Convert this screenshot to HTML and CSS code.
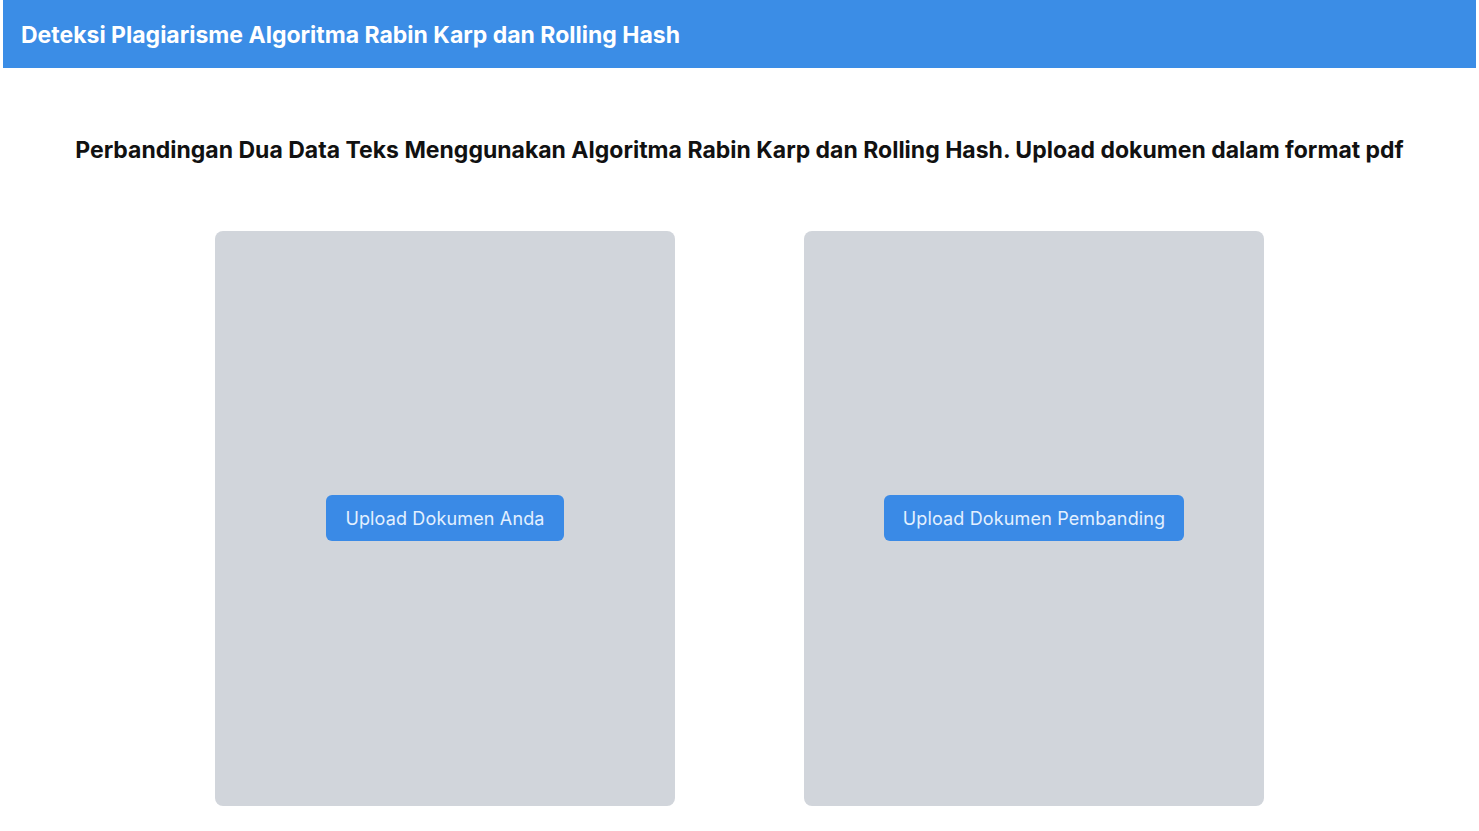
FILE: index.html
```html
<!DOCTYPE html>
<html lang="id">
<head>
<meta charset="utf-8">
<title>Deteksi Plagiarisme</title>
<link rel="stylesheet" href="styles.css">
</head>
<body>
<header class="topbar">
  <h1 class="brand">Deteksi Plagiarisme Algoritma Rabin Karp dan Rolling Hash</h1>
</header>
<main class="content">
  <h2 class="subtitle">Perbandingan Dua Data Teks Menggunakan Algoritma Rabin Karp dan Rolling Hash. Upload dokumen dalam format pdf</h2>
  <div class="panels">
    <section class="panel">
      <button class="upload-btn" type="button">Upload Dokumen Anda</button>
    </section>
    <section class="panel">
      <button class="upload-btn" type="button">Upload Dokumen Pembanding</button>
    </section>
  </div>
</main>
</body>
</html>
```

FILE: styles.css
```css
* { box-sizing: border-box; }
html, body { margin: 0; padding: 0; background: #ffffff; }
body {
  font-family: Inter, "Noto Sans", "Liberation Sans", sans-serif;
  color: #111111;
  padding: 0 3px;
}
.topbar {
  height: 68px;
  background: #3b8de6;
  display: flex;
  align-items: center;
  padding: 2px 18px 0;
}
.brand {
  margin: 0;
  font-size: 23px;
  font-weight: 700;
  color: #ffffff;
  letter-spacing: 0;
}
.content {
  display: flex;
  flex-direction: column;
  align-items: center;
}
.subtitle {
  margin: 68px 0 0;
  font-size: 23px;
  font-weight: 700;
  color: #111111;
  letter-spacing: 0;
  line-height: 28px;
  text-align: center;
}
.panels {
  margin-top: 67px;
  display: flex;
  gap: 129px;
}
.panel {
  width: 460px;
  height: 575px;
  background: #d1d5db;
  border-radius: 8px;
  display: flex;
  align-items: center;
  justify-content: center;
}
.upload-btn {
  font-family: Inter, "Noto Sans", "Liberation Sans", sans-serif;
  font-size: 18px;
  font-weight: 400;
  letter-spacing: 0.15px;
  color: #e3f0ff;
  background: #3a8ae6;
  border: none;
  border-radius: 6px;
  height: 46px;
  padding: 0 19px;
  margin-top: -1px;
  cursor: pointer;
}
```
